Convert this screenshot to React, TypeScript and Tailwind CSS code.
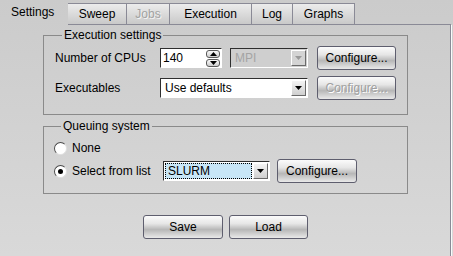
import React from "react";

const font = "font-['Liberation_Sans',Arial,sans-serif]";

function Arrow({ up = false, disabled = false }: { up?: boolean; disabled?: boolean }) {
  return (
    <svg width="7" height="4" viewBox="0 0 7 4" className="block">
      <polygon
        points={up ? "0,4 7,4 3.5,0" : "0,0 7,0 3.5,4"}
        fill={disabled ? "#9a9a9a" : "#000"}
      />
    </svg>
  );
}

function Button({ label, className, disabled = false }: { label: string; className: string; disabled?: boolean }) {
  return (
    <div
      className={`flex items-center justify-center rounded-[3px] border border-[#5e5e6e] bg-[linear-gradient(to_bottom,#fbfbfb_0%,#e6e6e6_35%,#b7b7b7_62%,#e9e9e9_100%)] ${
        disabled ? "text-[#a0a0a0] [text-shadow:1px_1px_0_#fff]" : "text-black"
      } ${className}`}
    >
      {label}
    </div>
  );
}

function ArrowBox({ disabled = false }: { disabled?: boolean }) {
  return (
    <div
      className={`flex w-[15px] items-center justify-center border border-t-white border-l-white border-b-[#6a6a6a] border-r-[#6a6a6a] ${
        disabled ? "bg-[#d4d4d4]" : "bg-[linear-gradient(to_bottom,#f4f4f4,#cfcfcf)]"
      }`}
    >
      <Arrow disabled={disabled} />
    </div>
  );
}

function Combo({
  text,
  className,
  disabled = false,
  focused = false,
}: {
  text: string;
  className: string;
  disabled?: boolean;
  focused?: boolean;
}) {
  return (
    <div
      className={`flex h-[20px] border border-t-[#2e2e2e] border-l-[#2e2e2e] border-b-white border-r-white ${
        disabled ? "bg-[#cfcfcf]" : "bg-white"
      } ${className}`}
    >
      <div className="flex flex-1 p-[1px]">
        {focused ? (
          <div className="flex flex-1 items-center border border-dotted border-black bg-[#c8e6f7] pl-[2px]">
            {text}
          </div>
        ) : (
          <div className={`flex flex-1 items-center pl-[3px] ${disabled ? "text-[#a4a4a4]" : ""}`}>
            {text}
          </div>
        )}
      </div>
      <div className="flex py-[1px] pr-[1px]">
        <ArrowBox disabled={disabled} />
      </div>
    </div>
  );
}

function SpinBox({ value }: { value: string }) {
  return (
    <div className="flex h-[20px] w-[62px] border border-t-[#2e2e2e] border-l-[#2e2e2e] border-b-white border-r-white bg-white">
      <div className="flex flex-1 items-center pl-[2px]">{value}</div>
      <div className="flex flex-col justify-center gap-[1px] pr-[1px]">
        <div className="flex h-[8px] w-[14px] items-center justify-center rounded-[3px] border border-[#5a5a5a] bg-[linear-gradient(to_bottom,#fafafa,#cdcdcd)]">
          <Arrow up />
        </div>
        <div className="flex h-[8px] w-[14px] items-center justify-center rounded-[3px] border border-[#5a5a5a] bg-[linear-gradient(to_bottom,#fafafa,#cdcdcd)]">
          <Arrow />
        </div>
      </div>
    </div>
  );
}

function Radio({ checked = false }: { checked?: boolean }) {
  return (
    <div className="flex h-[13px] w-[13px] items-center justify-center rounded-full border border-t-[#4a4a4a] border-l-[#4a4a4a] border-b-[#e0e0e0] border-r-[#e0e0e0] bg-white">
      {checked && <div className="h-[5px] w-[5px] rounded-full bg-black" />}
    </div>
  );
}

const tabs = [
  { label: "Sweep", w: "w-[59px]" },
  { label: "Jobs", w: "w-[43px]", disabled: true },
  { label: "Execution", w: "w-[82px]" },
  { label: "Log", w: "w-[41px]" },
  { label: "Graphs", w: "w-[62px]" },
];

export default function App() {
  return (
    <div
      className={`flex h-[256px] w-[453px] flex-col bg-[linear-gradient(to_bottom,#cbcbcb,#d9d9d9)] text-[12px] leading-[14px] text-black ${font}`}
    >
      {/* Tabs */}
      <div className="flex h-[25px] items-end">
        <div className="flex h-[25px] w-[68px] items-center pl-[11px] pb-[1px]">Settings</div>
        {tabs.map((t) => (
          <div
            key={t.label}
            className={`flex h-[22px] items-center justify-center border-t border-r border-b border-[#8a8a96] bg-[linear-gradient(to_bottom,#ececec,#c9c9c9)] first:border-l ${t.w} ${
              t.disabled ? "text-[#a2a2a2] [text-shadow:1px_1px_0_#f4f4f4]" : ""
            }`}
          >
            {t.label}
          </div>
        ))}
        <div className="mr-[2px] flex-1 self-stretch border-b border-[#8a8a96]" />
      </div>

      {/* Pane */}
      <div className="mr-[2px] flex flex-1 flex-col border-r border-[#8a8a96] pl-[43px] pr-[42px] shadow-[1px_0_0_#fafafa]">
        <fieldset className="mt-[3px] border border-[#8a8a8a] pb-[14px] pl-[11px] pr-[11px]">
          <legend className="ml-[7px] px-[2px]">Execution settings</legend>
          <div className="mt-[4px] flex h-[24px] items-center">
            <div className="w-[105px]">Number of CPUs</div>
            <SpinBox value="140" />
            <Combo text="MPI" className="ml-[8px] w-[78px]" disabled />
            <Button label="Configure..." className="ml-[9px] h-[24px] w-[79px]" />
          </div>
          <div className="mt-[6px] flex h-[24px] items-center">
            <div className="w-[105px]">Executables</div>
            <Combo text="Use defaults" className="w-[148px]" />
            <Button label="Configure..." className="ml-[9px] h-[24px] w-[79px]" disabled />
          </div>
        </fieldset>

        <fieldset className="mt-[4px] border border-[#8a8a8a] pb-[10px] pl-[10px]">
          <legend className="ml-[7px] px-[2px]">Queuing system</legend>
          <div className="mt-[7px] flex h-[16px] items-center gap-[5px]">
            <Radio />
            <span>None</span>
          </div>
          <div className="mt-[3px] flex h-[24px] items-center">
            <Radio checked />
            <span className="ml-[5px] w-[91px]">Select from list</span>
            <Combo text="SLURM" className="w-[107px]" focused />
            <Button label="Configure..." className="ml-[7px] h-[24px] w-[80px]" />
          </div>
        </fieldset>

        <div className="mt-[21px] flex justify-center gap-[6px]">
          <Button label="Save" className="h-[24px] w-[80px]" />
          <Button label="Load" className="h-[24px] w-[79px]" />
        </div>
      </div>
    </div>
  );
}
